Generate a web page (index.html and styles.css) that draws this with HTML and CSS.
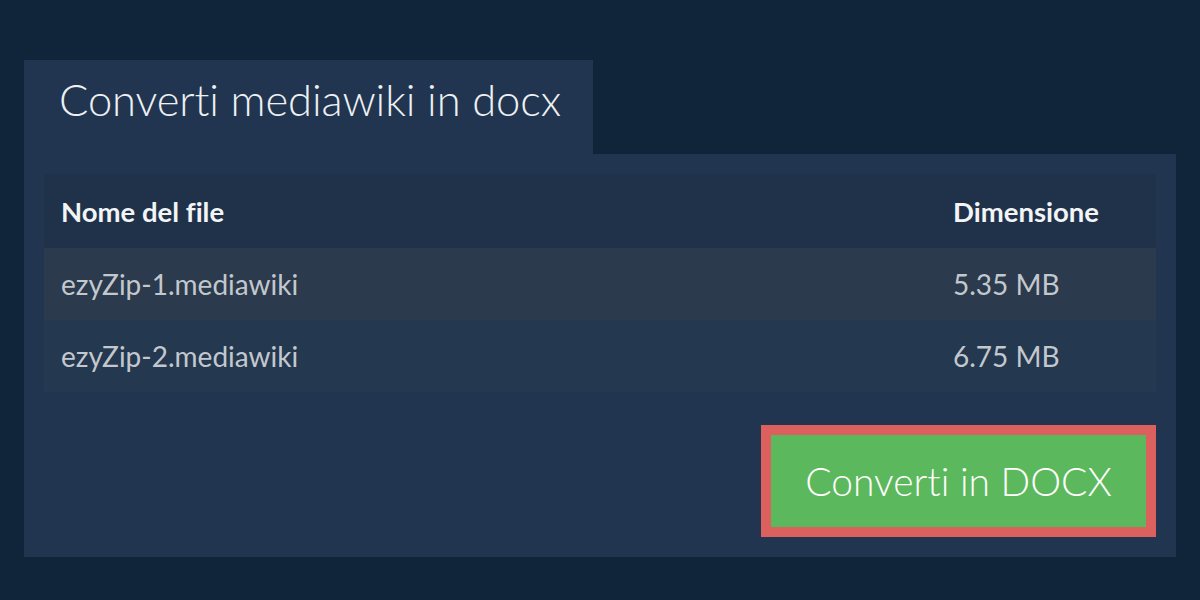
FILE: index.html
```html
<!DOCTYPE html>
<html lang="it">
<head>
<meta charset="utf-8">
<title>Converti mediawiki in docx</title>
<link rel="stylesheet" href="styles.css">
</head>
<body>
<div class="page">
  <div class="tab"><h1 class="title">Converti mediawiki in docx</h1></div>
  <div class="panel">
    <table class="files">
      <thead>
        <tr><th class="name">Nome del file</th><th class="size">Dimensione</th></tr>
      </thead>
      <tbody>
        <tr class="odd"><td class="name">ezyZip-1.mediawiki</td><td class="size">5.35 MB</td></tr>
        <tr class="even"><td class="name">ezyZip-2.mediawiki</td><td class="size">6.75 MB</td></tr>
      </tbody>
    </table>
    <div class="actions">
      <button class="convert">Converti in DOCX</button>
    </div>
  </div>
</div>
</body>
</html>
```
FILE: styles.css
```css
html, body {
  margin: 0;
  padding: 0;
  background: #10243a;
  font-family: Lato, "Open Sans", sans-serif;
  font-variant-ligatures: none;
}
.page {
  padding: 60px 24px 0 24px;
}
.tab {
  width: 569px;
  height: 94px;
  background: #213550;
  box-sizing: border-box;
  padding-left: 35px;
  display: flex;
  align-items: center;
}
.title {
  margin: 0;
  font-size: 43.5px;
  font-weight: 300;
  color: #eef0f2;
  line-height: 1;
  padding-bottom: 14px;
  letter-spacing: -0.1px;
}
.panel {
  background: #213550;
  padding: 20px 20px 20px 20px;
}
.files {
  width: 100%;
  border-collapse: collapse;
  font-size: 28px;
}
.files th {
  background: #1f324a;
  color: #f2f4f6;
  font-size: 27.5px;
  font-weight: 700;
  text-align: left;
  height: 74px;
  padding: 0 17px;
}
.files td {
  color: #c3c8ce;
  height: 72px;
  padding: 0 17px;
}
.files tr.odd td { background: #2b3a4c; }
.files tr.even td { background: #243850; }
.files .size { width: 186px; }
.actions {
  display: flex;
  justify-content: flex-end;
  margin-top: 33px;
}
.convert {
  width: 395px;
  height: 112px;
  background: #5cb85c;
  border: 10px solid #dc605d;
  color: #ffffff;
  font-family: Lato, "Open Sans", sans-serif;
  font-variant-ligatures: none;
  font-size: 39px;
  font-weight: 300;
  padding: 0;
  border-radius: 0;
}
```
